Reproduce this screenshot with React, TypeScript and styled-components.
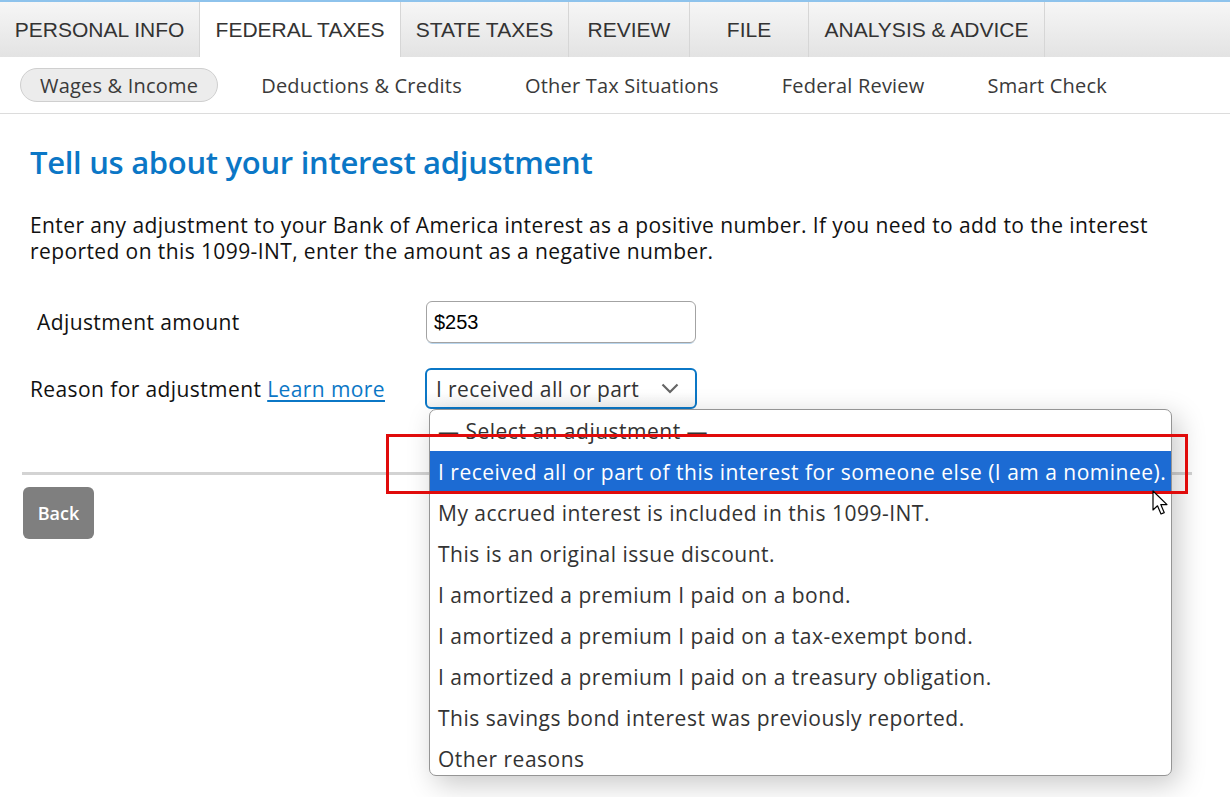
import React from 'react';
import styled, { createGlobalStyle } from 'styled-components';

const GlobalStyle = createGlobalStyle`
  html, body {
    margin: 0;
    padding: 0;
    background: #ffffff;
    overflow: hidden;
  }
  body {
    font-family: "Open Sans", "Noto Sans", sans-serif;
    color: #222;
  }
`;

const tabs = [
  { label: 'PERSONAL INFO', width: 200 },
  { label: 'FEDERAL TAXES', width: 201, active: true },
  { label: 'STATE TAXES', width: 168 },
  { label: 'REVIEW', width: 121 },
  { label: 'FILE', width: 119 },
  { label: 'ANALYSIS & ADVICE', width: 236 },
];

const subNav = [
  { label: 'Wages & Income', active: true },
  { label: 'Deductions & Credits' },
  { label: 'Other Tax Situations' },
  { label: 'Federal Review' },
  { label: 'Smart Check' },
];

const options = [
  '— Select an adjustment —',
  'I received all or part of this interest for someone else (I am a nominee).',
  'My accrued interest is included in this 1099-INT.',
  'This is an original issue discount.',
  'I amortized a premium I paid on a bond.',
  'I amortized a premium I paid on a tax-exempt bond.',
  'I amortized a premium I paid on a treasury obligation.',
  'This savings bond interest was previously reported.',
  'Other reasons',
];

const Page = styled.div`
  width: 1230px;
  height: 797px;
  display: flex;
  flex-direction: column;
`;

const TabBar = styled.nav`
  display: flex;
  height: 55px;
  border-top: 2px solid #8ec3ec;
  background: linear-gradient(#f6f6f6, #e3e3e3);
`;

const Tab = styled.div<{ $active?: boolean; $width: number }>`
  width: ${(p) => p.$width}px;
  display: flex;
  align-items: center;
  justify-content: center;
  font-family: "Liberation Sans", Arial, sans-serif;
  font-size: 21px;
  color: #333;
  border-right: 1px solid #d6d6d6;
  box-sizing: border-box;
  background: ${(p) => (p.$active ? '#ffffff' : 'transparent')};
`;

const SubNav = styled.nav`
  display: flex;
  align-items: center;
  gap: 23px;
  height: 57px;
  padding-left: 20px;
  border-bottom: 1px solid #dcdcdc;
  box-sizing: border-box;
`;

const SubItem = styled.div<{ $active?: boolean }>`
  height: 34px;
  box-sizing: border-box;
  display: flex;
  align-items: center;
  padding: 0 19px;
  font-size: 20px;
  letter-spacing: 0.2px;
  color: #3a3a3a;
  border-radius: 17px;
  border: 1px solid ${(p) => (p.$active ? '#cfcfcf' : 'transparent')};
  background: ${(p) => (p.$active ? '#ececec' : 'transparent')};
`;

const Content = styled.main`
  padding: 30px 0 0 22px;
  display: flex;
  flex-direction: column;
`;

const Title = styled.h1`
  margin: 0 0 32px 8px;
  font-size: 31px;
  line-height: 36px;
  font-weight: 600;
  letter-spacing: -0.3px;
  color: #0b77c6;
`;

const Intro = styled.p`
  margin: 0 0 37px 8px;
  font-size: 21px;
  letter-spacing: 0.4px;
  line-height: 26px;
  color: #111;
  width: 1150px;
`;

const FormGrid = styled.div`
  display: grid;
  grid-template-columns: 404px auto;
  row-gap: 25px;
  align-items: center;
`;

const Label = styled.div<{ $indent?: number }>`
  padding-left: ${(p) => 8 + (p.$indent ?? 0)}px;
  font-size: 21px;
  letter-spacing: 0.4px;
  color: #111;
`;

const LearnMore = styled.a`
  color: #0b77c6;
  text-decoration: underline;
  text-underline-offset: 3px;
`;

const TextInput = styled.div`
  width: 270px;
  height: 42px;
  box-sizing: border-box;
  border: 1px solid #a3a3a3;
  border-radius: 6px;
  display: flex;
  align-items: center;
  padding-left: 7px;
  font-family: "Liberation Sans", Arial, sans-serif;
  font-size: 20px;
  color: #000;
  box-shadow: 0 2px 0 -1px #b9d6ee;
`;

const SelectWrap = styled.div`
  position: relative;
  margin-left: -1px;
`;

const SelectBox = styled.div`
  width: 272px;
  height: 41px;
  box-sizing: border-box;
  border: 2px solid #0b77c6;
  border-radius: 6px;
  display: flex;
  align-items: center;
  justify-content: space-between;
  padding: 0 16px 0 9px;
  font-size: 21px;
  letter-spacing: 0.4px;
  color: #333;
  background: linear-gradient(#ffffff 60%, #f2f2f2);
`;

const Dropdown = styled.ul`
  position: absolute;
  top: 41px;
  left: 4px;
  width: 743px;
  height: 367px;
  box-sizing: border-box;
  overflow: hidden;
  margin: 0;
  padding: 0;
  list-style: none;
  background: #fff;
  border: 1px solid #959595;
  border-radius: 7px;
  box-shadow: 6px 8px 28px rgba(0, 0, 0, 0.22);
  z-index: 5;
`;

const Option = styled.li<{ $selected?: boolean }>`
  height: 41px;
  flex-shrink: 0;
  display: flex;
  align-items: center;
  padding-left: 8px;
  font-size: 21px;
  letter-spacing: 0.5px;
  white-space: nowrap;
  color: ${(p) => (p.$selected ? '#ffffff' : '#333')};
  background: ${(p) => (p.$selected ? '#1c6bd3' : 'transparent')};
`;

const Highlight = styled.div`
  position: absolute;
  top: 66px;
  left: -39px;
  width: 802px;
  height: 60px;
  box-sizing: border-box;
  border: 3px solid #e00b0b;
  z-index: 6;
  pointer-events: none;
`;

const Cursor = styled.svg`
  position: absolute;
  top: 122px;
  left: 727px;
  z-index: 7;
`;

const Divider = styled.hr`
  margin: 63px 0 0;
  width: 1170px;
  height: 3px;
  border: none;
  background: #d3d3d3;
`;

const BackButton = styled.button`
  margin-top: 12px;
  margin-left: 1px;
  width: 71px;
  height: 52px;
  border: none;
  border-radius: 6px;
  background: #7f7f7f;
  color: #fff;
  font-family: "Open Sans", "Noto Sans", sans-serif;
  font-size: 18px;
  font-weight: 600;
`;

const Chevron = () => (
  <svg width="18" height="11" viewBox="0 0 18 11">
    <path d="M1.5 1.5 L9 9 L16.5 1.5" fill="none" stroke="#666" strokeWidth="2.2" />
  </svg>
);

export default function App() {
  return (
    <Page>
      <GlobalStyle />
      <TabBar>
        {tabs.map((t) => (
          <Tab key={t.label} $width={t.width} $active={t.active}>
            {t.label}
          </Tab>
        ))}
      </TabBar>
      <SubNav>
        {subNav.map((s) => (
          <SubItem key={s.label} $active={s.active}>
            {s.label}
          </SubItem>
        ))}
      </SubNav>
      <Content>
        <Title>Tell us about your interest adjustment</Title>
        <Intro>
          Enter any adjustment to your Bank of America interest as a positive number. If you need
          to add to the interest reported on this 1099-INT, enter the amount as a negative number.
        </Intro>
        <FormGrid>
          <Label $indent={7}>Adjustment amount</Label>
          <TextInput>$253</TextInput>
          <Label>
            Reason for adjustment <LearnMore>Learn more</LearnMore>
          </Label>
          <SelectWrap>
            <SelectBox>
              <span>I received all or part</span>
              <Chevron />
            </SelectBox>
            <Dropdown>
              {options.map((o, i) => (
                <Option key={o} $selected={i === 1}>
                  {o}
                </Option>
              ))}
            </Dropdown>
            <Highlight />
            <Cursor width="20" height="27" viewBox="0 0 20 27">
              <path
                d="M1 1 L1 20 L5.5 15.8 L9 24 L12.2 22.6 L8.8 14.6 L15 14.6 Z"
                fill="#fff"
                stroke="#000"
                strokeWidth="1.2"
                strokeLinejoin="round"
              />
            </Cursor>
          </SelectWrap>
        </FormGrid>
        <Divider />
        <BackButton>Back</BackButton>
      </Content>
    </Page>
  );
}
